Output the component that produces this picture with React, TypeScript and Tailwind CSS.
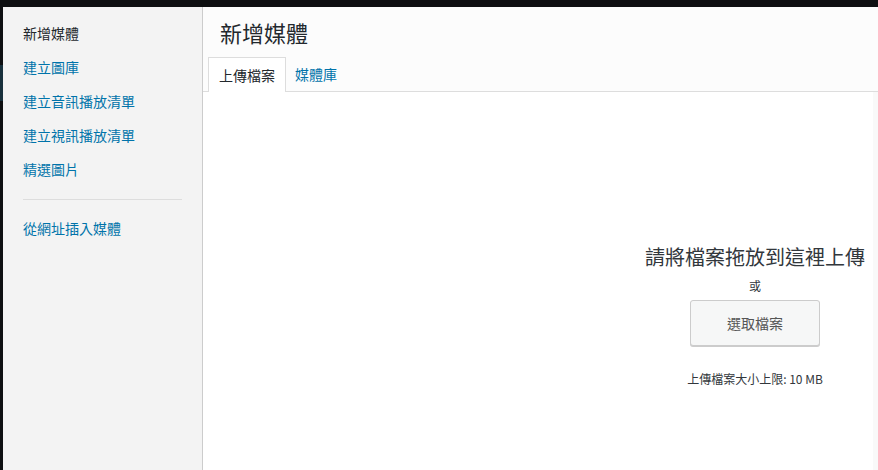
const FONT = { fontFamily: '"Noto Sans CJK TC", "Noto Sans", sans-serif' }

const MENU = [
  { label: '新增媒體', active: true },
  { label: '建立圖庫' },
  { label: '建立音訊播放清單' },
  { label: '建立視訊播放清單' },
  { label: '精選圖片' },
]

export default function App() {
  return (
    <div className="flex h-[470px] w-[878px] bg-[#0e0f11] pt-[7px]" style={FONT}>
      {/* sliver of the page behind the modal */}
      <div className="flex w-[3px] flex-col">
        <div className="h-[58px]" />
        <div className="h-[36px] bg-[#18303c]" />
      </div>

      {/* Menu */}
      <div className="flex w-[200px] flex-col border-r border-[#cccccc] bg-[#f3f3f3] pt-[9px]">
        {MENU.map((item) => (
          <div
            key={item.label}
            className={`h-[34px] pl-[20px] text-[14px] leading-[34px] ${item.active ? 'text-[#23282d]' : 'text-[#0073aa]'}`}
          >
            {item.label}
          </div>
        ))}
        <div className="mx-[20px] mt-[13px] h-px bg-[#dddddd]" />
        <div className="mt-[11px] h-[34px] pl-[20px] text-[14px] leading-[34px] text-[#0073aa]">
          從網址插入媒體
        </div>
      </div>

      {/* Frame */}
      <div className="flex flex-1 flex-col bg-white">
        <div className="border-b border-[#dddddd] bg-[#fcfcfc]">
          <h1 className="h-[50px] pl-[17px] text-[22px] leading-[50px] font-normal text-[#23282d]">新增媒體</h1>
          <div className="flex h-[34px] pl-[5px] text-[14px]">
            <div className="-mb-px h-[35px] border border-b-0 border-[#dddddd] bg-white px-[10px] leading-[34px] text-[#23282d]">
              上傳檔案
            </div>
            <div className="px-[9px] leading-[34px] text-[#0073aa]">媒體庫</div>
          </div>
        </div>

        <div className="flex flex-1">
          <div className="flex flex-1 flex-col items-center pt-[151px] pl-[434px]">
            <p className="text-[20px] leading-[28px] text-[#32373c]">請將檔案拖放到這裡上傳</p>
            <p className="mt-[6px] text-[12px] leading-[18px] text-[#32373c]">或</p>
            <button className="mt-[5px] h-[46px] w-[130px] rounded-[3px] border border-[#cccccc] bg-[#f6f7f7] text-[14px] text-[#555555] shadow-[0_1px_0_#cccccc]">
              選取檔案
            </button>
            <p className="mt-[24px] text-[12px] leading-[18px] text-[#32373c]">上傳檔案大小上限: 10 MB</p>
          </div>
          <div className="w-[5px] bg-[#f9f9f9]" />
        </div>
      </div>
    </div>
  )
}
